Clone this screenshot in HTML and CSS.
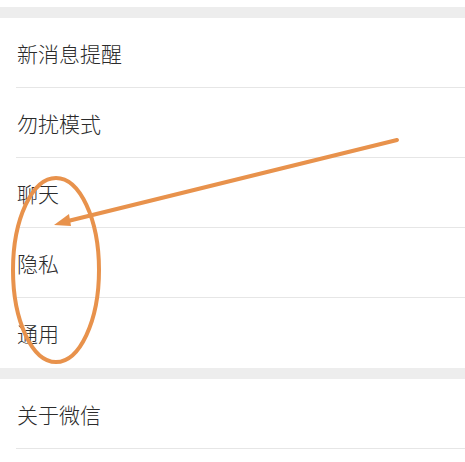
FILE: index.html
```html
<!DOCTYPE html>
<html>
<head>
<meta charset="utf-8">
<link rel="stylesheet" href="styles.css">
</head>
<body>
<div class="page">
  <div class="top"></div>
  <div class="gap"></div>
  <div class="group">
    <div class="row"><span>新消息提醒</span></div>
    <div class="row"><span>勿扰模式</span></div>
    <div class="row"><span>聊天</span></div>
    <div class="row"><span>隐私</span></div>
    <div class="row last"><span>通用</span></div>
  </div>
  <div class="gap"></div>
  <div class="group">
    <div class="row"><span>关于微信</span></div>
  </div>
  <svg class="mark" width="465" height="462" viewBox="0 0 465 462">
    <ellipse cx="56" cy="270" rx="43" ry="92" fill="none" stroke="#e8924c" stroke-width="4"/>
    <line x1="397" y1="140" x2="68" y2="221" stroke="#e8924c" stroke-width="4" stroke-linecap="round"/>
    <polygon points="54,225 69,214 71,226" fill="#e8924c"/>
  </svg>
</div>
</body>
</html>
```
FILE: styles.css
```css
* { box-sizing: border-box; }
html, body { margin: 0; padding: 0; background: #fff; }
.page {
  position: relative;
  width: 465px;
  height: 462px;
  overflow: hidden;
  font-family: "Noto Sans CJK SC", "Noto Sans", sans-serif;
  color: #2b2b2b;
}
.top { height: 7px; background: #fff; }
.gap { height: 11px; background: #ededed; }
.group { background: #fff; padding-left: 16px; }
.row {
  height: 70px;
  display: flex;
  align-items: center;
  border-bottom: 1px solid #e6e6e6;
  font-size: 21px;
  font-weight: 300;
  padding-left: 1px;
}
.row.last { border-bottom: none; }
.mark { position: absolute; left: 0; top: 0; pointer-events: none; }
```
